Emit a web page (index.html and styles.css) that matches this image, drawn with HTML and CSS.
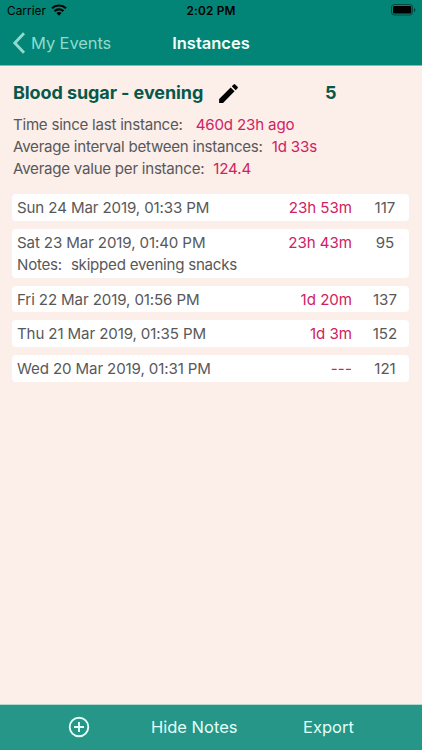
FILE: index.html
```html
<!DOCTYPE html>
<html lang="en">
<head>
<meta charset="utf-8">
<title>Instances</title>
<link rel="stylesheet" href="styles.css">
</head>
<body>
<header class="header">
  <div class="status">
    <span class="carrier">Carrier</span>
    <svg class="wifi" width="16" height="12" viewBox="0 0 16 12"><g fill="none" stroke="#000" stroke-width="2.2"><path d="M1 4.300a10.200 10.200 0 0 1 14 0"/><path d="M3.600 7.100a6.400 6.400 0 0 1 8.800 0"/></g><path d="M5.400 9a4 4 0 0 1 5.200 0L8 11.700z"/></svg>
    <span class="time">2:02 PM</span>
    <svg class="battery" width="25" height="12" viewBox="0 0 25 12"><rect x=".5" y=".5" width="21" height="10.500" rx="2.800" fill="none" stroke="#000" stroke-opacity=".45"/><rect x="2" y="2" width="18.300" height="7.600" rx="1.400"/><path d="M23 4v4q1.400-.7 1.400-2T23 4z" fill-opacity=".5"/></svg>
  </div>
  <nav class="nav">
    <a class="back"><svg width="14" height="22" viewBox="0 0 14 22"><path d="M12 1.300 2.800 11l9.200 9.700" fill="none" stroke="currentColor" stroke-width="2.900"/></svg><span>My Events</span></a>
    <h1 class="title">Instances</h1>
  </nav>
</header>
<main class="content">
  <div class="heading">
    <h2 class="name">Blood sugar - evening</h2>
    <svg class="pencil" width="25" height="25" viewBox="0 0 24 24"><path d="M3 17.250V21h3.750L17.810 9.940l-3.750-3.750L3 17.250zM20.710 7.040a1 1 0 0 0 0-1.410l-2.340-2.340a1 1 0 0 0-1.410 0l-1.830 1.830 3.750 3.750 1.830-1.830z"/></svg>
    <span class="count">5</span>
  </div>
  <dl class="stats">
    <div class="stat wide"><dt>Time since last instance:</dt><dd>460d 23h ago</dd></div>
    <div class="stat"><dt>Average interval between instances:</dt><dd>1d 33s</dd></div>
    <div class="stat"><dt>Average value per instance:</dt><dd>124.4</dd></div>
  </dl>
  <ul class="list">
    <li class="row"><span class="date">Sun 24 Mar 2019, 01:33 PM</span><span class="gap">23h 53m</span><span class="value">117</span></li>
    <li class="row"><span class="date">Sat 23 Mar 2019, 01:40 PM</span><span class="gap">23h 43m</span><span class="value">95</span><p class="notes"><span>Notes:</span><span>skipped evening snacks</span></p></li>
    <li class="row"><span class="date">Fri 22 Mar 2019, 01:56 PM</span><span class="gap">1d 20m</span><span class="value">137</span></li>
    <li class="row"><span class="date">Thu 21 Mar 2019, 01:35 PM</span><span class="gap">1d 3m</span><span class="value">152</span></li>
    <li class="row"><span class="date">Wed 20 Mar 2019, 01:31 PM</span><span class="gap dashes">---</span><span class="value">121</span></li>
  </ul>
</main>
<footer class="toolbar">
  <svg class="add" width="22" height="22" viewBox="0 0 22 22" fill="none" stroke="currentColor" stroke-width="1.900"><circle cx="11" cy="11" r="9.300"/><path d="M11 6v10M6 11h10"/></svg>
  <span class="hide">Hide Notes</span>
  <span class="export">Export</span>
</footer>
</body>
</html>
```
FILE: styles.css
```css
* { box-sizing: border-box; margin: 0; padding: 0; }
body {
  width: 422px; height: 750px; overflow: hidden;
  display: flex; flex-direction: column;
  background: #fceee9; color: #58585a;
  font: 15.100px/22.300px Inter, sans-serif;
  white-space: nowrap;
}
.header { height: 66px; background: #028576; border-bottom: 1px solid #80bcb0; }
.status {
  height: 22px; padding: 0 6px 0 7px;
  display: grid; grid-template-columns: 44px 1fr auto 1fr 25px; align-items: center;
  color: #000; font-size: 11.800px; line-height: 22px;
}
.carrier { letter-spacing: 0.05px; }
.time { font-weight: 600; margin-left: -20px; letter-spacing: 0.2px; }
.wifi { margin-top: -2px; }
.battery { grid-column: 5; margin-top: -2px; }
.nav {
  height: 43px; padding: 0 12px;
  display: grid; grid-template-columns: 1fr auto 1fr; align-items: center;
}
.back { display: flex; align-items: center; gap: 5px; color: #8fdacd; font-size: 16.500px; letter-spacing: -0.1px; }
.title { color: #f2fffc; font-size: 16.500px; font-weight: 600; }
.content { flex: 1; padding: 14px 13px 0; }
.heading { display: flex; align-items: center; height: 26px; color: #06594a; font-size: 18px; font-weight: 700; }
.name { width: 203px; font-size: 18px; letter-spacing: -0.09px; }
.pencil { fill: #000; }
.count { margin-left: 84px; }
.stats { padding-top: 7.500px; }
.stat { display: flex; gap: 9px; letter-spacing: -0.25px; }
.stat dd { letter-spacing: -0.15px; }
.wide { gap: 13px; }
dd, .gap { color: #d02263; }
.list { list-style: none; margin: 13.500px 0 0 -1px; display: flex; flex-direction: column; gap: 8px; }
.row {
  padding: 3px 4px 1.400px 5px; border-radius: 4px; background: #fff;
  display: grid; grid-template-columns: 1fr auto 53px;
}
.date { letter-spacing: -0.12px; }
.gap { letter-spacing: -0.03px; }
.dashes { letter-spacing: 0.150px; }
.value { padding-left: 13px; text-align: center; }
.notes { grid-column: 1 / -1; display: flex; gap: 9px; letter-spacing: -0.24px; }
.toolbar {
  height: 46px; border-top: 1px solid #b5d9cd; background: #269689; color: #e2fff8;
  display: flex; align-items: center; padding-left: 68px; font-size: 16.500px;
}
.add { margin-top: -1px; }
.hide { margin-left: 61px; width: 152px; }
```
